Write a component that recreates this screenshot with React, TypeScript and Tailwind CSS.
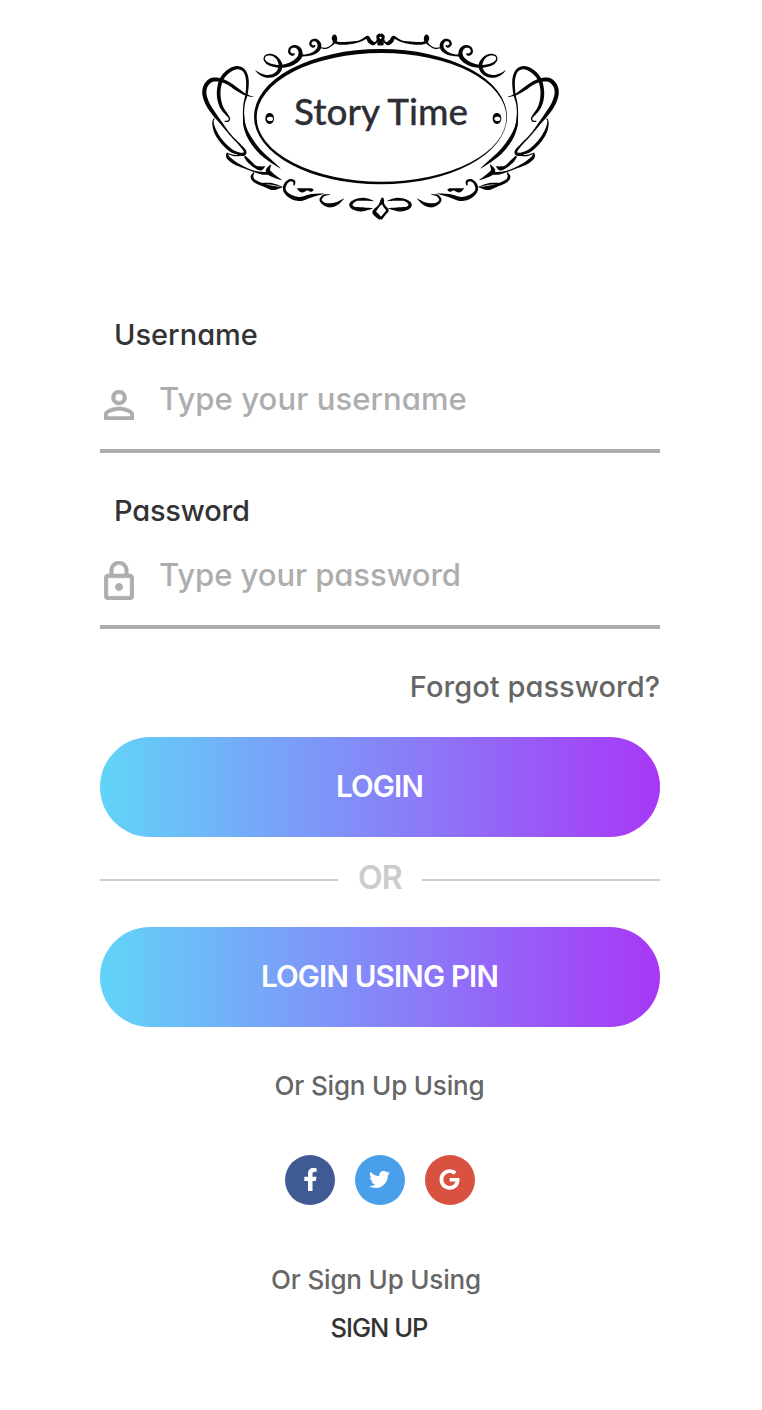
import React from "react";
import { FaFacebookF, FaTwitter, FaGoogle } from "react-icons/fa";

type Pt = [number, number, number];

// Builds a closed outline around a smoothed centre line; the third value of each point is the pen width.
function brush(pts: Pt[]): string {
  const at = (i: number) => pts[Math.max(0, Math.min(pts.length - 1, i))];
  const line: number[][] = [];
  for (let i = 0; i < pts.length - 1; i++) {
    for (let s = 0; s < 8; s++) {
      const t = s / 8;
      line.push(
        [0, 1, 2].map((k) => {
          const a = at(i - 1)[k], b = at(i)[k], c = at(i + 1)[k], d = at(i + 2)[k];
          return 0.5 * (2 * b + (c - a) * t + (2 * a - 5 * b + 4 * c - d) * t * t + (3 * b - a - 3 * c + d) * t * t * t);
        }),
      );
    }
  }
  line.push(at(pts.length - 1));
  const left: string[] = [];
  const right: string[] = [];
  line.forEach((p, i) => {
    const a = line[Math.max(0, i - 1)];
    const b = line[Math.min(line.length - 1, i + 1)];
    const dx = b[0] - a[0], dy = b[1] - a[1];
    const n = Math.hypot(dx, dy) || 1;
    const w = Math.max(1.5, p[2] * 1.38) / 2;
    left.push(`${(p[0] - (dy / n) * w).toFixed(1)} ${(p[1] + (dx / n) * w).toFixed(1)}`);
    right.unshift(`${(p[0] + (dy / n) * w).toFixed(1)} ${(p[1] - (dx / n) * w).toFixed(1)}`);
  });
  return `M${left.join("L")}L${right.join("L")}Z`;
}

const strokes: Pt[][] = [
  [[181, 136, 1], [195, 147, 4], [215, 154, 6], [238, 150, 7], [253, 136, 8], [256, 117, 8], [245, 98, 5], [228, 89, 4], [212, 92, 3], [208, 104, 3], [221, 117, 5], [250, 124, 6], [280, 120, 8], [303, 108, 9], [316, 92, 9], [314, 74, 8], [301, 64, 6], [286, 69, 5], [283, 82, 5], [292, 89, 5], [299, 86, 3]],
  [[310, 90, 6], [332, 91, 4], [355, 85, 6], [370, 73, 8], [373, 58, 8], [364, 46, 6], [351, 47, 5], [346, 57, 5], [354, 65, 5], [361, 61, 3]],
  [[372, 67, 2], [392, 70, 3], [410, 61, 3], [421, 46, 7], [419, 33, 7], [415, 41, 7], [421, 51, 6], [435, 55, 6], [462, 54, 6], [492, 49, 4], [510, 40, 5], [518, 37, 7], [524, 48, 9], [534, 55, 8], [543, 52, 4], [549, 44, 6], [549, 34, 7], [557, 29, 7]],
  [[549, 42, 6], [556, 48, 6], [551, 56, 7], [557, 57, 6]],
  [[175, 216, 1], [150, 208, 4], [125, 192, 7], [100, 175, 7], [75, 165, 8], [50, 165, 9], [33, 181, 9], [28, 205, 9], [37, 235, 9], [56, 265, 8], [80, 296, 5], [105, 328, 3], [136, 361, 4], [150, 379, 6], [145, 388, 7], [128, 385, 6], [105, 374, 7], [77, 346, 7], [60, 317, 6], [54, 292, 3], [58, 280, 2]],
  [[170, 350, 7], [153, 315, 5], [146, 280, 3], [147, 240, 3], [155, 205, 5], [157, 165, 6], [148, 138, 6], [128, 128, 7], [103, 137, 8], [81, 160, 8], [72, 190, 8], [72, 220, 8], [80, 247, 7], [94, 267, 5], [103, 279, 3], [100, 288, 3], [89, 289, 3]],
  [[146, 270, 2], [149, 304, 5], [166, 342, 8], [194, 379, 8], [225, 406, 6], [256, 430, 1]],
  [[97, 383, 3], [99, 397, 7], [118, 413, 7], [144, 426, 4], [174, 438, 3], [204, 445, 6], [228, 444, 6]],
  [[99, 386, 2], [121, 392, 3], [143, 390, 1]],
  [[149, 394, 4], [162, 409, 7], [180, 425, 6], [197, 430, 9], [210, 424, 1]],
  [[228, 418, 1], [219, 438, 10], [237, 453, 7], [260, 465, 1]],
  [[177, 442, 2], [171, 455, 6], [179, 468, 6], [208, 481, 7], [235, 489, 9], [263, 486, 1]],
  [[190, 476, 1], [225, 476, 4], [262, 485, 1]],
  [[297, 481, 3], [297, 469, 5], [284, 466, 5], [271, 478, 6], [269, 497, 6], [286, 514, 8], [315, 522, 9], [350, 512, 7], [386, 506, 1]],
  [[306, 490, 1], [320, 496, 9], [337, 493, 5], [348, 495, 8], [356, 494, 1]],
  [[405, 509, 1], [387, 511, 4], [377, 524, 5], [386, 536, 6], [405, 541, 9], [425, 536, 7], [447, 521, 1]],
  [[536, 528, 1], [510, 523, 6], [484, 525, 5], [468, 537, 7], [475, 549, 7], [500, 553, 9], [533, 550, 1]],
];

const pendant: Pt[][] = [
  [[562, 518, 4], [561, 530, 9], [552, 542, 4], [538, 560, 8], [545, 570, 9], [557, 581, 7]],
  [[561, 528, 6], [567, 542, 5], [577, 556, 6], [570, 566, 5], [557, 582, 6]],
];

function Flourish() {
  return (
    <>
      {strokes.map((s, i) => (
        <path key={i} d={brush(s)} />
      ))}
    </>
  );
}

const eye =
  "M224 264c8 0 13 7 13 16s-5 17-13 17-13-7-13-17 5-16 13-16zM226 275c-6 0-10 1-10 6s4 7 10 7 8-3 8-7-2-6-8-6z";

function Logo() {
  return (
    <svg viewBox="0 0 1110 600" className="block h-[200px] w-[370px]" fill="#050505" role="img" aria-label="Story Time">
      <path fillRule="evenodd" d="M177 275a379.500 203 0 1 0 759 0a379.500 203 0 1 0 -759 0zM185 277a374.500 193 0 1 0 749 0a374.500 193 0 1 0 -749 0z" />
      <Flourish />
      <g transform="translate(1113 0) scale(-1 1)">
        <Flourish />
      </g>
      {pendant.map((s, i) => (
        <path key={i} d={brush(s)} />
      ))}
      <path fillRule="evenodd" d={eye} />
      <path fillRule="evenodd" d={eye} transform="translate(682 0)" />
      <text x="297" y="301" textLength="522" lengthAdjust="spacingAndGlyphs" fill="#2d2e33" stroke="#2d2e33" strokeWidth="0.8" className="font-['Lato',sans-serif] text-[111px]">
        Story Time
      </text>
    </svg>
  );
}

function PersonIcon() {
  return (
    <svg viewBox="4 4 16 16" className="h-[30px] w-[30px]" fill="#adadad" stroke="#adadad" strokeWidth="0.3">
      <path d="M12 5.900a2.100 2.100 0 1 1 0 4.200a2.100 2.100 0 0 1 0-4.200m0 9c2.970 0 6.100 1.460 6.100 2.100v1.100H5.900V17c0-.640 3.130-2.100 6.100-2.100M12 4C9.790 4 8 5.790 8 8s1.790 4 4 4 4-1.790 4-4-1.790-4-4-4zm0 9c-2.670 0-8 1.340-8 4v3h16v-3c0-2.660-5.330-4-8-4z" />
    </svg>
  );
}

function LockIcon() {
  return (
    <svg viewBox="4 1 16 21" className="h-[39px] w-[30px]" fill="#adadad" stroke="#adadad" strokeWidth="0.3">
      <path d="M12 17c1.100 0 2-.900 2-2s-.900-2-2-2-2 .900-2 2 .900 2 2 2zm6-9h-1V6c0-2.760-2.240-5-5-5S7 3.240 7 6v2H6c-1.100 0-2 .900-2 2v10c0 1.100.900 2 2 2h12c1.100 0 2-.900 2-2V10c0-1.100-.900-2-2-2zM8.900 6c0-1.710 1.390-3.100 3.100-3.100s3.100 1.390 3.100 3.100v2H8.900V6zM18 20H6V10h12v10z" />
    </svg>
  );
}

const button =
  "flex h-[100px] w-full items-center justify-center rounded-full bg-[linear-gradient(to_right,#61d4f8,#8a7cf8_56%,#a837f6)] pr-px pb-0.5 text-[29.5px] font-semibold tracking-[-0.8px] text-white";
const input =
  "ml-[25px] h-[80px] w-[490px] text-[31px] outline-none placeholder:text-[#adadad]";

export default function App() {
  return (
    <main className="h-[1410px] w-[762px] bg-white pt-[25px] font-['Inter',sans-serif] font-medium text-[#333333] [font-feature-settings:'cv11']">
      <div className="ml-[195px]">
        <Logo />
      </div>
      <form className="ml-[100px] w-[560px]" onSubmit={(e) => e.preventDefault()}>
        <div className="mt-[89px] h-[139px] border-b-4 border-[#adadad]">
          <label htmlFor="user" className="block pb-0.5 pl-3.5 text-[29px] leading-[42px]">Username</label>
          <div className="flex pl-1">
            <div className="pt-8"><PersonIcon /></div>
            <input id="user" placeholder="Type your username" className={`${input} tracking-[0.1px]`} />
          </div>
        </div>
        <div className="mt-[37px] h-[139px] border-b-4 border-[#adadad]">
          <label htmlFor="pass" className="block pb-0.5 pl-3.5 text-[29px] leading-[42px] tracking-[-0.2px]">Password</label>
          <div className="flex pl-1">
            <div className="pt-[27px]"><LockIcon /></div>
            <input id="pass" type="password" placeholder="Type your password" className={`${input} tracking-[-0.05px]`} />
          </div>
        </div>
        <a className="mt-[37px] block text-right text-[29px] leading-[42px] tracking-[0.05px] text-[#666666]">Forgot password?</a>
        <button className={`${button} mt-[29px]`}>LOGIN</button>
        <div className="flex h-[90px] items-center gap-5 pb-1 text-[32px] font-semibold tracking-[-0.8px] text-[#cccccc]">
          <span className="h-0.5 flex-1 bg-[#cccccc]" />
          <span className="pb-1">OR</span>
          <span className="h-0.5 flex-1 bg-[#cccccc]" />
        </div>
        <button className={button}>LOGIN USING PIN</button>
        <p className="mt-[39px] pr-px text-center text-[26px] leading-[40px] tracking-[-0.18px] text-[#666666]">Or Sign Up Using</p>
        <div className="mt-[49px] flex justify-center gap-5 text-white">
          <a className="flex h-[50px] w-[50px] items-center justify-center rounded-full bg-[#405a93] pb-0.5"><FaFacebookF className="h-[23px] w-[23px]" /></a>
          <a className="flex h-[50px] w-[50px] items-center justify-center rounded-full bg-[#4a9feb] pr-px pb-0.5"><FaTwitter className="h-[21px] w-[21px]" /></a>
          <a className="flex h-[50px] w-[50px] items-center justify-center rounded-full bg-[#d95140] pr-0.5 pb-0.5"><FaGoogle className="h-[21px] w-[21px]" /></a>
        </div>
        <p className="mt-[55px] pr-2 text-center text-[26px] leading-[40px] tracking-[-0.18px] text-[#666666]">Or Sign Up Using</p>
        <a className="mt-2 block pr-0.5 text-center text-[25.5px] leading-[40px] tracking-[-1px]">SIGN UP</a>
      </form>
    </main>
  );
}
